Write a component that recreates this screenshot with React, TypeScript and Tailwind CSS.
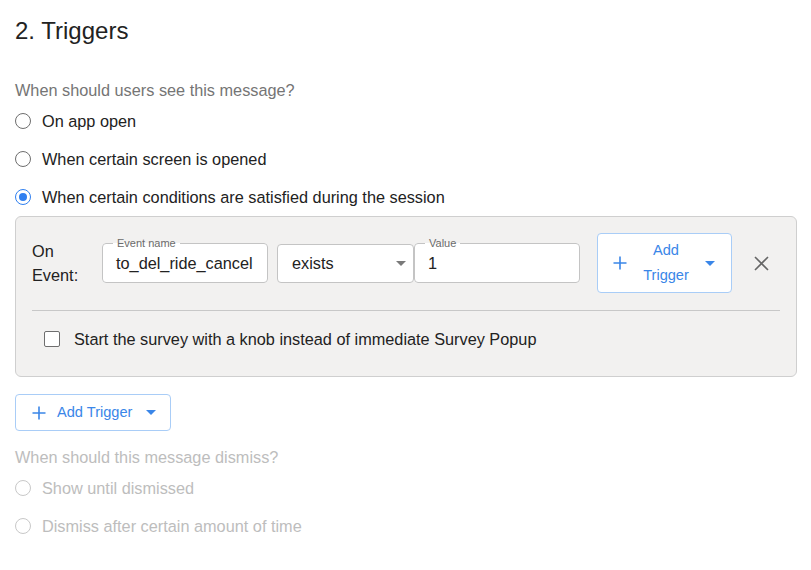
import React from "react";

function Radio({ checked, disabled }: { checked?: boolean; disabled?: boolean }) {
  const ring = checked ? "border-[#2f7ff0]" : disabled ? "border-[#c8c8c8]" : "border-[#6e6e6e]";
  return (
    <span className={`flex h-[16px] w-[16px] items-center justify-center rounded-full border-[1.5px] ${ring}`}>
      {checked && <span className="h-[8px] w-[8px] rounded-full bg-[#2f7ff0]" />}
    </span>
  );
}

function RadioRow({ label, checked, disabled }: { label: string; checked?: boolean; disabled?: boolean }) {
  return (
    <div className="flex h-[38px] items-center">
      <Radio checked={checked} disabled={disabled} />
      <span className={`ml-[11px] text-[16.3px] ${disabled ? "text-[#bdbdbd]" : "text-[#222]"}`}>{label}</span>
    </div>
  );
}

function Caret({ color }: { color: string }) {
  return (
    <svg width="10" height="5" viewBox="0 0 10 5">
      <path d="M0 0 L10 0 L5 5 Z" fill={color} />
    </svg>
  );
}

function Plus({ color }: { color: string }) {
  return (
    <svg width="14" height="14" viewBox="0 0 14 14">
      <path d="M7 0.5 V13.5 M0.5 7 H13.5" stroke={color} strokeWidth="1.6" />
    </svg>
  );
}

function Field({ label, value, width }: { label?: string; value: string; width: string }) {
  return (
    <div className={`relative h-[39px] ${width}`}>
      <fieldset className="absolute inset-x-0 bottom-0 top-[-6px] m-0 rounded-[4px] border border-[#c4c4c4] bg-white px-[10px] py-0">
        {label && (
          <legend className="px-[4px] text-[11px] leading-[11px] text-[#6b6b6b]">{label}</legend>
        )}
      </fieldset>
      <div className="relative flex h-full items-center pl-[14px] text-[16.3px] text-[#222]">{value}</div>
    </div>
  );
}

export default function App() {
  return (
    <div
      className="min-h-[570px] w-[811px] bg-white pl-[15px] pr-[14px]"
      style={{ fontFamily: '"Liberation Sans", Arial, sans-serif' }}
    >
      <h2 className="pt-[17px] text-[24px] leading-[28px] text-[#222]">2. Triggers</h2>
      <div className="mt-[35px] text-[16.3px] leading-[20px] text-[#757575]">When should users see this message?</div>
      <div className="mt-[2px] flex flex-col">
        <RadioRow label="On app open" />
        <RadioRow label="When certain screen is opened" />
        <RadioRow label="When certain conditions are satisfied during the session" checked />
      </div>
      <div className="rounded-[6px] border border-[#cfcfcf] bg-[#f2f1f0] px-[16px] pt-[16px]">
        <div className="flex items-center">
          <div className="w-[70px] text-[16.3px] leading-[24px] text-[#222]">
            On
            <br />
            Event:
          </div>
          <Field label="Event name" value="to_del_ride_cancel" width="w-[166px]" />
          <div className="ml-[9px] flex h-[39px] w-[137px] items-center justify-between rounded-[4px] border border-[#c4c4c4] bg-white pl-[14px] pr-[7px] text-[16.3px] text-[#222]">
            <span>exists</span>
            <Caret color="#7a7a7a" />
          </div>
          <Field label="Value" value="1" width="w-[166px]" />
          <button className="ml-[17px] flex h-[60px] w-[135px] items-center rounded-[4px] border border-[#a9cdf7] bg-white pl-[15px] pr-[16px] text-[14.6px] text-[#3a86e8]">
            <Plus color="#3a86e8" />
            <span className="flex-1 text-center leading-[25px]">
              Add
              <br />
              Trigger
            </span>
            <Caret color="#3a86e8" />
          </button>
          <div className="ml-[17px] flex h-[24px] w-[24px] items-center justify-center">
            <svg width="15" height="15" viewBox="0 0 15 15">
              <path d="M1 1 L14 14 M14 1 L1 14" stroke="#666" strokeWidth="1.6" />
            </svg>
          </div>
        </div>
        <div className="mt-[17px] h-px bg-[#c8c8c8]" />
        <div className="flex items-center pb-[28px] pl-[12px] pt-[19px] leading-[18px]">
          <span className="h-[16px] w-[16px] rounded-[2px] border-[1.5px] border-[#6e6e6e] bg-white" />
          <span className="ml-[14px] text-[16.3px] text-[#222]">Start the survey with a knob instead of immediate Survey Popup</span>
        </div>
      </div>
      <button className="mt-[17px] flex h-[37px] w-[156px] items-center rounded-[4px] border border-[#a9cdf7] bg-white pl-[16px] text-[14.6px] text-[#3a86e8]">
        <Plus color="#3a86e8" />
        <span className="ml-[11px]">Add Trigger</span>
        <span className="ml-[14px] flex"><Caret color="#3a86e8" /></span>
      </button>
      <div className="mt-[16px] text-[16.3px] leading-[20px] text-[#bdbdbd]">When should this message dismiss?</div>
      <div className="mt-[2px] flex flex-col">
        <RadioRow label="Show until dismissed" disabled />
        <RadioRow label="Dismiss after certain amount of time" disabled />
      </div>
    </div>
  );
}
